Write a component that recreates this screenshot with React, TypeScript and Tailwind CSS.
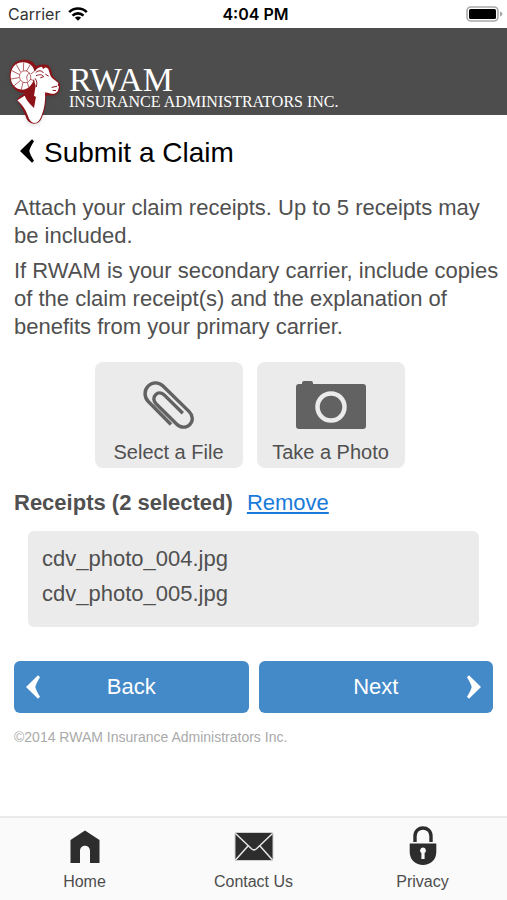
import { clsx } from 'clsx';

// ─────────────────────────────────────────
// Types
// ─────────────────────────────────────────

interface TileButtonProps {
  label: string;
  children: React.ReactNode;
}

interface TabLinkProps {
  label: string;
  children: React.ReactNode;
}

// ─────────────────────────────────────────
// Data
// ─────────────────────────────────────────

const receipts = ['cdv_photo_004.jpg', 'cdv_photo_005.jpg'];

// ─────────────────────────────────────────
// Icons
// ─────────────────────────────────────────

function WifiIcon() {
  return (
    <svg width="20" height="14" viewBox="0 0 20 14" fill="none" stroke="#000" strokeWidth="2.6" aria-hidden="true">
      <path d="M1.2 5.1a12.6 12.6 0 0 1 17.6 0" />
      <path d="M4.5 8.6a7.9 7.9 0 0 1 11 0" />
      <path d="M10 13.8 6.9 10.8a4.4 4.4 0 0 1 6.2 0Z" fill="#000" stroke="none" />
    </svg>
  );
}

function BatteryIcon() {
  return (
    <svg width="37" height="16" viewBox="0 0 37 16" aria-hidden="true">
      <rect x="1" y="1" width="31" height="14" rx="4" fill="#fff" stroke="#a9a9a9" strokeWidth="1.6" />
      <rect x="3" y="3" width="27" height="10" rx="1.5" />
      <path d="M34 5.6c1.8.6 2.4 1.4 2.4 2.4s-.6 1.8-2.4 2.4Z" fill="#a9a9a9" />
    </svg>
  );
}

function RamLogo() {
  return (
    <svg width="56" height="70" viewBox="23 21 168 210" className="drop-shadow-sm" aria-hidden="true">
      <path
        d="M31 82C29 48 48 28 76 29c17 0 28 8 34 20 10-6 27-8 38-2 7 8 9 18 11 30l22 22c2 9 2 18-2 25-5 9-16 15-29 12l-10 1c1 24-4 46-12 65-5 14-14 19-23 19-12 0-22-7-26-22-8-19-15-34-27-48 6-10 16-18 27-22-27 2-46-20-48-47Z"
        fill="#8c1218"
      />
      <g fill="#fff">
        <path d="M34 82C33 54 48 37 71 37c23 0 37 17 35 39-2 20-14 42-37 43-20 0-34-16-35-37Z" />
        <path d="M108 63c4-8 11-12 20-13l3 7 9-5 7 5 5 16c2 9 8 13 15 18l10 8-2 8 4 2-3 13c-4 7-12 11-20 9-8-2-17-5-25-3-7 1-15 7-21 13l-6-4 5-30c-4-9-6-24-6-44Z" />
        <path d="M54 151 76 137c5 13 15 25 28 37 3-15 4-26 7-36 6-7 15-11 26-12 2 27-2 50-10 70-5 15-12 23-21 23s-16-7-21-23c-7-19-17-33-31-45Z" />
      </g>
      <g fill="none" stroke="#8c1218" strokeWidth="2" strokeLinecap="round">
        <path d="M90 69c-8-11-26-8-29 5-3 15 8 27 22 23 11-3 15-15 7-28-7 4-10 13-6 22" />
        <path d="m63 65-12-21M72 61l1-22M82 62l10-17M59 73 38 62M58 83l-23 4M63 92l-20 16M71 98l-5 20M84 98l4 13M94 88l9 4M96 71l9-7" />
      </g>
      <g fill="none" stroke="#8c1218" strokeWidth="3" strokeLinecap="round">
        <path d="M110 67c8-8 18-5 22 1M111 77c9-5 18-3 22 3l-9 3M108 86c5 7 6 15 3 24" />
        <path d="m139 73 8 5M158 112l14-3M161 121l8 1" />
      </g>
    </svg>
  );
}

function PaperclipIcon() {
  return (
    <svg width="52" height="50" viewBox="0 0 52 50" fill="none" stroke="#626262" strokeWidth="3.4" aria-hidden="true">
      <path d="M28 44.500 5.300 21.500C1.200 17.300.8 10.400 5 6.200 9.200 1.800 15.900 1.900 20 6L46.200 31.600C50 35.400 50.300 40.900 47 44.300 43.500 48.200 37.600 48 33.800 44.200L13 23.800C10.300 21.100 10.100 17.100 12.600 14.700 15.100 12.200 18.700 12.500 21.400 15.100L39.800 33.200" />
    </svg>
  );
}

function CameraIcon() {
  return (
    <svg width="70" height="50" viewBox="0 0 70 50" aria-hidden="true">
      <path
        d="M3 4h3V3a2 2 0 0 1 2-2h7a2 2 0 0 1 2 2v1h50a3 3 0 0 1 3 3v39a3 3 0 0 1-3 3H3a3 3 0 0 1-3-3V7a3 3 0 0 1 3-3Z"
        fill="#626262"
      />
      <circle cx="35" cy="27" r="13.5" fill="none" stroke="#ebebeb" strokeWidth="4.5" />
    </svg>
  );
}

function Chevron({ flipped = false }: { flipped?: boolean }) {
  return (
    <svg
      width="14"
      height="24"
      viewBox="0 0 14 24"
      fill="currentColor"
      className={clsx('shrink-0', flipped && 'rotate-180')}
      aria-hidden="true"
    >
      <path d="M0 12 12 .3 14 2.200C11.600 6 10 9.200 9.300 12c.7 2.800 2.300 6 4.700 9.800L12 23.700Z" />
    </svg>
  );
}

function HomeIcon() {
  return (
    <svg width="30" height="40" viewBox="0 0 30 40" fill="#2d2d2d" aria-hidden="true">
      <path d="M15 4.5 29.5 14v23H20V25c0-7-10-7-10 0v12H.5V14Z" />
    </svg>
  );
}

function MailIcon() {
  return (
    <svg width="40" height="40" viewBox="0 0 40 40" fill="none" aria-hidden="true">
      <rect x="1" y="6.5" width="38" height="28" rx="1.5" fill="#2d2d2d" stroke="#d0d0d0" />
      <path
        d="m1.500 7.500 16 15.300c1.700 1.500 3.300 1.500 5 0l16-15.300M1.500 34 14 20M38.500 34 26 20"
        stroke="#e6e6e6"
        strokeWidth="1.5"
      />
    </svg>
  );
}

function LockIcon() {
  return (
    <svg width="28" height="40" viewBox="0 0 28 40" aria-hidden="true">
      <path d="M6 16V10C6 -.7 22 -.7 22 10v6" fill="none" stroke="#2d2d2d" strokeWidth="3.4" />
      <path d="M.7 17.500h26.600V26C27.300 34 21 39 14 39S.7 34 .7 26Z" fill="#2d2d2d" />
      <path d="M14 21.500a3 3 0 0 1 1.600 5.500v6h-3.200v-6A3 3 0 0 1 14 21.500Z" fill="#fafafa" />
    </svg>
  );
}

// ─────────────────────────────────────────
// Controls
// ─────────────────────────────────────────

function TileButton({ label, children }: TileButtonProps) {
  return (
    <button
      type="button"
      className="flex w-[148px] flex-col items-center rounded-lg bg-[#ebebeb] pt-[18px] pb-0.5 text-xl leading-[28px]"
    >
      <span className="flex h-[50px] items-center">{children}</span>
      <span className="mt-2">{label}</span>
    </button>
  );
}

function TabLink({ label, children }: TabLinkProps) {
  return (
    <a href="#" className="flex flex-1 flex-col items-center text-base text-[#4d4d4d]">
      {children}
      <span className="mt-1">{label}</span>
    </a>
  );
}

// ─────────────────────────────────────────
// App
// ─────────────────────────────────────────

export default function App() {
  return (
    <div className="flex min-h-screen flex-col bg-white font-['Liberation_Sans',Arial,sans-serif] text-[22px] leading-[28px] text-[#505050]">
      <div className="grid h-7 grid-cols-3 items-center pr-1 pl-2 text-base text-black">
        <div className="flex items-center gap-2 font-[Inter,sans-serif] text-[#333]">
          Carrier
          <WifiIcon />
        </div>
        <div className="text-center font-[Inter,sans-serif] font-semibold">4:04 PM</div>
        <div className="flex justify-end">
          <BatteryIcon />
        </div>
      </div>

      <header className="flex h-[87px] items-end gap-1.5 bg-[#4d4d4d] pl-[7px]">
        {/* the ram's neck hangs below the header bar */}
        <div className="-mb-3 shrink-0">
          <RamLogo />
        </div>
        <div className="pb-1 font-['Liberation_Serif',serif] text-white">
          <div className="text-[34px] leading-[25px]">RWAM</div>
          <div className="text-base leading-[19px]">INSURANCE ADMINISTRATORS INC.</div>
        </div>
      </header>

      <main className="flex-1 px-3.5">
        <h1 className="flex items-center gap-2.5 pt-[18px] pl-1.5 text-[28px] leading-[40px] text-black">
          <button type="button" aria-label="Go back" className="pb-1">
            <Chevron />
          </button>
          Submit a Claim
        </h1>

        <div className="mt-[21px] -mr-2 space-y-[7px]">
          <p>Attach your claim receipts. Up to 5 receipts may be included.</p>
          <p>
            If RWAM is your secondary carrier, include copies of the claim receipt(s) and the explanation of benefits
            from your primary carrier.
          </p>
        </div>

        <div className="mt-[21px] flex justify-center gap-3.5 pr-2">
          <TileButton label="Select a File">
            <PaperclipIcon />
          </TileButton>
          <TileButton label="Take a Photo">
            <CameraIcon />
          </TileButton>
        </div>

        <div className="mt-[21px] flex gap-3.5">
          <h2 className="font-bold">Receipts (2 selected)</h2>
          <a href="#" className="text-[#1a7ad9] underline">
            Remove
          </a>
        </div>

        <ul className="mx-3.5 mt-3.5 rounded-md bg-[#ebebeb] px-3.5 pt-2.5 pb-4 leading-[35px]">
          {receipts.map((name) => (
            <li key={name}>{name}</li>
          ))}
        </ul>

        <div className="mt-[34px] flex gap-2.5 text-white">
          <button type="button" className="flex h-[52px] flex-1 items-center rounded-md bg-[#4489c8] px-3">
            <Chevron />
            <span className="flex-1 pr-3.5">Back</span>
          </button>
          <button type="button" className="flex h-[52px] flex-1 items-center rounded-md bg-[#4489c8] px-3">
            <span className="flex-1 pl-3.5">Next</span>
            <Chevron flipped />
          </button>
        </div>

        <p className="mt-2.5 text-sm leading-[28px] text-[#aaa]">©2014 RWAM Insurance Administrators Inc.</p>
      </main>

      <nav className="flex h-[84px] border-t-2 border-[#ebebeb] bg-[#fafafa] pt-2">
        <TabLink label="Home">
          <HomeIcon />
        </TabLink>
        <TabLink label="Contact Us">
          <MailIcon />
        </TabLink>
        <TabLink label="Privacy">
          <LockIcon />
        </TabLink>
      </nav>
    </div>
  );
}
